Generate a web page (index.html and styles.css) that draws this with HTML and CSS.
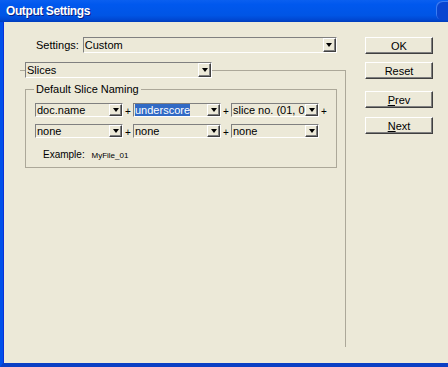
FILE: index.html
```html
<!DOCTYPE html>
<html lang="en">
<head>
    <meta charset="UTF-8">
    <meta name="viewport" content="width=device-width, initial-scale=1.0">
    <title>Output Settings</title>
    <link rel="stylesheet" href="styles.css">
</head>
<body>
    <div class="window">
        <div class="titlebar">
            <span class="title">Output Settings</span>
            <span class="caption-btn"></span>
        </div>
        <div class="client">
            <div class="left">
                <div class="settings-row">
                    <label>Settings:</label>
                    <div class="combo settings-combo">
                        <span class="combo-text">Custom</span>
                        <span class="combo-btn"></span>
                    </div>
                </div>

                <fieldset class="divider">
                    <legend>
                        <div class="combo slices-combo">
                            <span class="combo-text">Slices</span>
                            <span class="combo-btn"></span>
                        </div>
                    </legend>

                    <fieldset class="group">
                        <legend>Default Slice Naming</legend>
                        <div class="naming-grid">
                            <div class="combo small"><span class="combo-text">doc.name</span><span class="combo-btn"></span></div>
                            <span class="plus">+</span>
                            <div class="combo small"><span class="combo-text"><span class="selected">underscore</span></span><span class="combo-btn"></span></div>
                            <span class="plus">+</span>
                            <div class="combo small"><span class="combo-text">slice no. (01, 0</span><span class="combo-btn"></span></div>
                            <span class="plus">+</span>

                            <div class="combo small"><span class="combo-text">none</span><span class="combo-btn"></span></div>
                            <span class="plus">+</span>
                            <div class="combo small"><span class="combo-text">none</span><span class="combo-btn"></span></div>
                            <span class="plus">+</span>
                            <div class="combo small"><span class="combo-text">none</span><span class="combo-btn"></span></div>
                            <span></span>
                        </div>
                        <div class="example">Example: <span class="example-value">MyFile_01</span></div>
                    </fieldset>
                </fieldset>
            </div>

            <div class="buttons">
                <button type="button" class="btn btn-ok">OK</button>
                <button type="button" class="btn btn-reset">Reset</button>
                <button type="button" class="btn btn-prev"><u>P</u>rev</button>
                <button type="button" class="btn btn-next"><u>N</u>ext</button>
            </div>
        </div>
    </div>
</body>
</html>
```

FILE: styles.css
```css
html, body {
    margin: 0;
    padding: 0;
}
body {
    width: 448px;
    height: 367px;
    overflow: hidden;
    background: #ece9d8;
    font-family: "Liberation Sans", Arial, sans-serif;
    font-size: 11px;
    color: #000;
}
.window {
    display: flex;
    flex-direction: column;
    height: 367px;
    box-sizing: border-box;
    border-left: 3px solid #0050ea;
    border-bottom: 4px solid #0a3fc4;
    box-shadow: inset 1px 0 0 #0831d9;
}
.titlebar {
    display: flex;
    align-items: center;
    justify-content: space-between;
    height: 22px;
    margin-left: -3px;
    padding-left: 6px;
    background: linear-gradient(to bottom, #0a5ff0 0%, #0058ee 20%, #0055e5 70%, #0049d4 88%, #003dbb 100%);
}
.title {
    color: #fff;
    font-weight: bold;
    font-size: 12px;
    letter-spacing: -0.4px;
    text-shadow: 1px 1px 0 #0a1e80;
}
.caption-btn {
    width: 12px;
    height: 19px;
    margin-top: -2px;
    border-radius: 6px 0 0 6px;
    background: #0a45d0;
    box-shadow: inset 1px 1px 0 #3b7cf2;
}
.client {
    display: flex;
    flex: 1;
}
.left {
    width: 343px;
    padding-left: 17px;
    box-sizing: border-box;
}
.settings-row {
    display: flex;
    align-items: center;
    gap: 4px;
    margin-top: 15px;
    padding-left: 16px;
}
.combo {
    display: flex;
    height: 16px;
    box-sizing: border-box;
    border-top: 1px solid #808080;
    border-left: 1px solid #808080;
    border-bottom: 1px solid #fff;
    border-right: 1px solid #fff;
    background: #ece9d8;
}
.combo-text {
    flex: 1;
    min-width: 0;
    padding-left: 1px;
    line-height: 14px;
    white-space: nowrap;
    overflow: hidden;
}
.combo-btn {
    display: flex;
    align-items: center;
    justify-content: center;
    width: 13px;
    box-sizing: border-box;
    border-left: 1px solid #fff;
    border-top: 1px solid #fff;
    border-right: 1px solid #404040;
    border-bottom: 1px solid #404040;
    box-shadow: inset -1px -1px 0 #808080;
}
.combo-btn::after {
    content: "";
    border-left: 3px solid transparent;
    border-right: 3px solid transparent;
    border-top: 4px solid #000;
}
.settings-combo {
    width: 254px;
}
.divider {
    margin: 9px 0 0 0;
    padding: 0 8px 0 5px;
    height: 285px;
    box-sizing: border-box;
    border: none;
    border-top: 1px solid #aca899;
    border-right: 1px solid #aca899;
    min-width: 0;
}
.divider > legend {
    padding: 0;
    margin: 0;
}
.slices-combo {
    width: 187px;
}
.group {
    margin: 5px 0 0 0;
    padding: 7px 9px 7px 9px;
    border: 1px solid #aca899;
    min-width: 0;
}
.group > legend {
    padding: 0 2px;
    margin-left: -1px;
    line-height: 13px;
}
.naming-grid {
    display: grid;
    grid-template-columns: 88px 10px 88px 10px 88px 10px;
    row-gap: 7px;
    align-items: center;
}
.combo.small {
    height: 14px;
}
.combo.small .combo-text {
    line-height: 12px;
}
.selected {
    background: #316ac5;
    color: #fff;
}
.plus {
    text-align: center;
    font-size: 10px;
    padding-top: 2px;
}
.example {
    margin-top: 11px;
    padding-left: 8px;
    font-size: 10px;
}
.example-value {
    font-size: 8px;
    margin-left: 4px;
}
.buttons {
    display: flex;
    flex-direction: column;
    margin-left: 19px;
    padding-top: 15px;
}
.btn {
    width: 68px;
    height: 17px;
    padding: 0;
    box-sizing: border-box;
    background: #ece9d8;
    font-family: "Liberation Sans", Arial, sans-serif;
    font-size: 11px;
    color: #000;
    border: 1px solid;
    border-color: #fff #404040 #404040 #fff;
    box-shadow: inset -1px -1px 0 #808080;
    cursor: pointer;
}
.btn-reset {
    margin-top: 8px;
}
.btn-prev {
    margin-top: 12px;
}
.btn-next {
    margin-top: 9px;
}
```
